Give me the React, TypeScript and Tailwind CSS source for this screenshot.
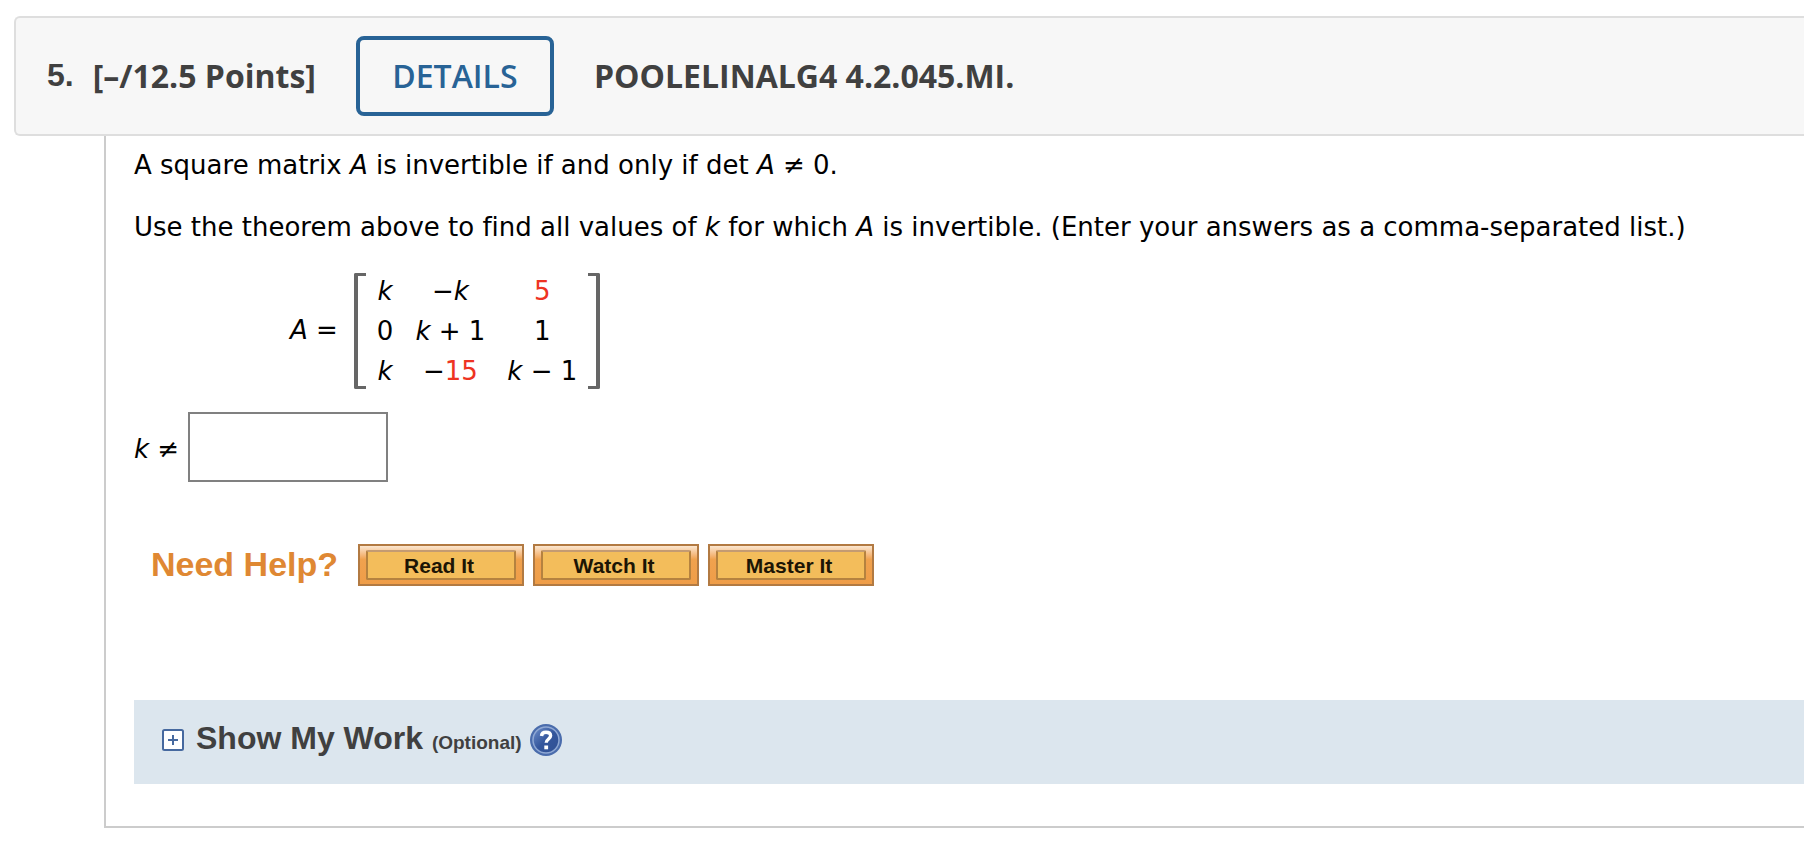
import type { ReactNode } from "react";

function Cell({ children }: { children: ReactNode }) {
  return <td className="h-10 px-[11px] py-0 text-center whitespace-nowrap">{children}</td>;
}

function Bracket({ side }: { side: "left" | "right" }) {
  return (
    <span
      aria-hidden="true"
      className={
        side === "left"
          ? "h-[116px] w-3 rounded-l-xs border-y-3 border-l-4 border-[#666]"
          : "h-[116px] w-3 rounded-r-xs border-y-3 border-r-4 border-[#666]"
      }
    />
  );
}

function HelpButton({ label }: { label: string }) {
  return (
    <button
      type="button"
      className="flex h-[42px] w-[166px] border-2 border-[#b27a42] bg-linear-to-b from-[#fbe6cf] via-[#f0a24e] via-35% to-[#ef9d48] px-1.5 py-1"
    >
      <span className="flex flex-1 items-center justify-center rounded-xs border-2 border-[#b5823f] border-t-[#c49b72] bg-[#f3bd5b] pt-0.5 pr-1 text-[21px] leading-6 font-bold text-[#1c1505]">
        {label}
      </span>
    </button>
  );
}

function PlusIcon() {
  return (
    <svg viewBox="0 0 22 22" className="size-[22px]" aria-hidden="true">
      <rect x="1" y="1" width="20" height="20" rx="1.5" fill="#fff" stroke="#46699f" strokeWidth="2" />
      <path d="M11 6v10M6 11h10" stroke="#46699f" strokeWidth="2" />
    </svg>
  );
}

function HelpIcon() {
  return (
    <svg viewBox="0 0 32 32" className="size-8" aria-hidden="true">
      <defs>
        <linearGradient id="disc" x1="0" y1="0" x2="1" y2="1">
          <stop offset="0" stopColor="#6f90cb" />
          <stop offset="0.5" stopColor="#34569c" />
          <stop offset="1" stopColor="#2f5094" />
        </linearGradient>
      </defs>
      <circle cx="16" cy="16" r="16" fill="#4a6cac" />
      <circle cx="16" cy="16" r="13" fill="url(#disc)" stroke="#8fa8d4" strokeWidth="1.5" />
      <path d="M11.500 12c.2-2.600 2-3.800 4.500-3.800 2.700 0 4.600 1.300 4.600 3.600 0 3.200-4.400 3.200-4.400 7" fill="none" stroke="#fff" strokeWidth="3.400" />
      <rect x="14.300" y="21.500" width="3.800" height="3.800" fill="#fff" />
    </svg>
  );
}

export default function App() {
  return (
    <main className="overflow-hidden bg-white pt-4 pb-9 pl-3.5 font-['Verdana','DejaVu_Sans',sans-serif] text-[26px] leading-8 text-black [font-variant-ligatures:none]">
      <header className="flex h-[120px] items-center rounded-l-md border-2 border-r-0 border-[#dedede] bg-[#f7f7f7] pl-[31px] font-['Open_Sans',sans-serif] text-[32px] leading-10 font-bold text-[#404040]">
        <span className="pr-[19px] pb-0.5 font-['Liberation_Sans',sans-serif]">5.</span>
        <h2>[–/12.5 Points]</h2>
        <button type="button" className="mx-10 h-20 w-[198px] rounded-lg border-4 border-[#286396] font-semibold text-[#286396]">
          DETAILS
        </button>
        <span>POOLELINALG4 4.2.045.MI.</span>
      </header>

      <section className="ml-[90px] border-b-2 border-l-2 border-[#ccc] pt-[13px] pb-[42px] pl-7">
        <p>
          A square matrix <i>A</i> is invertible if and only if det <i>A</i> ≠ 0.
        </p>
        <p className="mt-[30px]">
          Use the theorem above to find all values of <i>k</i> for which <i>A</i> is invertible. (Enter your answers as a
          comma-separated list.)
        </p>

        <div className="mt-7 flex items-center pl-[156px]">
          <span className="pr-4 pb-0.5">
            <i>A</i> =
          </span>
          <Bracket side="left" />
          <table className="border-collapse">
            <tbody>
              <tr>
                <Cell><i>k</i></Cell>
                <Cell>−<i>k</i></Cell>
                <Cell><span className="text-[#ee3322]">5</span></Cell>
              </tr>
              <tr>
                <Cell>0</Cell>
                <Cell><i>k</i> + 1</Cell>
                <Cell>1</Cell>
              </tr>
              <tr>
                <Cell><i>k</i></Cell>
                <Cell>−<span className="text-[#ee3322]">15</span></Cell>
                <Cell><i>k</i> − 1</Cell>
              </tr>
            </tbody>
          </table>
          <Bracket side="right" />
        </div>

        <div className="mt-[21px] flex items-center gap-[9px]">
          <label htmlFor="answer" className="pt-1">
            <i>k</i> ≠
          </label>
          <input id="answer" type="text" className="h-[70px] w-[200px] border-2 border-[#808080] bg-white px-2" />
        </div>

        <div className="mt-[62px] flex items-center pl-[17px] font-['Liberation_Sans',sans-serif]">
          <h3 className="pr-5 pb-0.5 text-[34px] leading-10 font-bold text-[#df8833]">Need Help?</h3>
          <div className="flex gap-[9px]">
            <HelpButton label="Read It" />
            <HelpButton label="Watch It" />
            <HelpButton label="Master It" />
          </div>
        </div>

        <div className="mt-[114px] flex h-[84px] items-center bg-[#dce6ee] pb-1 pl-7 font-['Liberation_Sans',sans-serif] font-bold text-[#404040]">
          <button type="button" className="flex items-center gap-3">
            <PlusIcon />
            <span className="text-[32px] leading-10">
              Show My Work <span className="text-[19px]">(Optional)</span>
            </span>
          </button>
          <a href="#help" aria-label="Help" className="ml-2">
            <HelpIcon />
          </a>
        </div>
      </section>
    </main>
  );
}
